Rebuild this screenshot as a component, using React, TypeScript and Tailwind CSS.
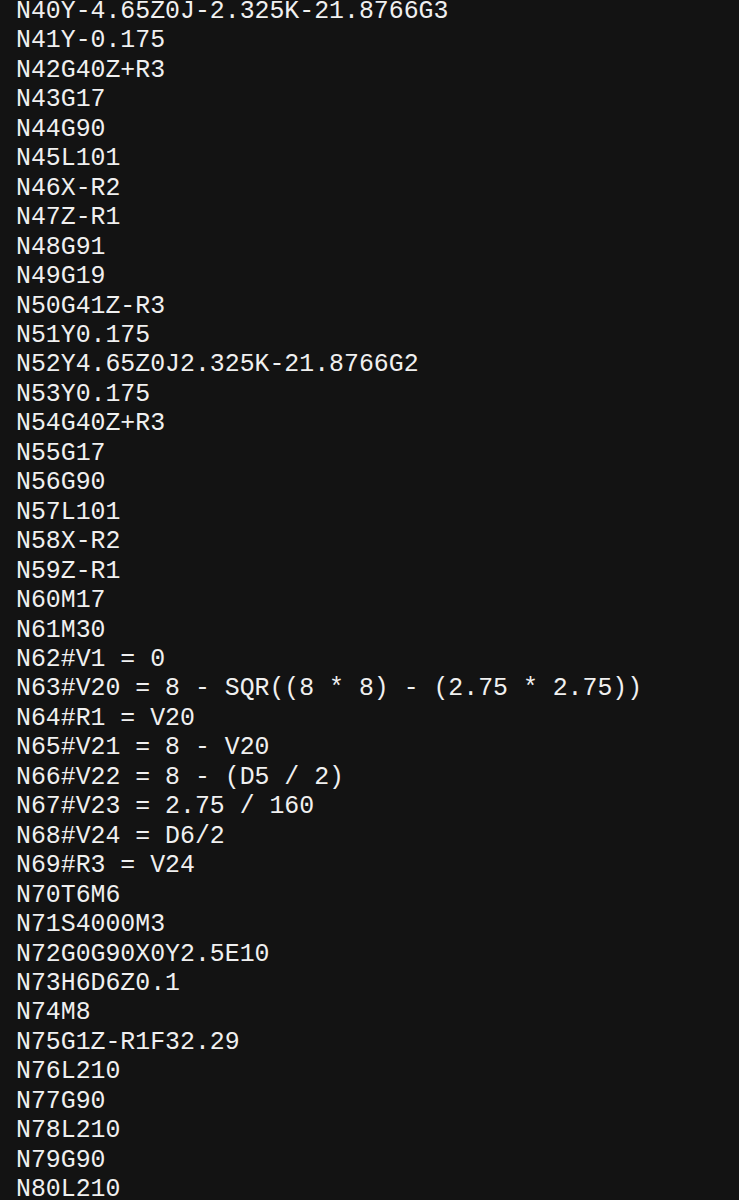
import React from 'react';

const lines = [
  'N40Y-4.65Z0J-2.325K-21.8766G3',
  'N41Y-0.175',
  'N42G40Z+R3',
  'N43G17',
  'N44G90',
  'N45L101',
  'N46X-R2',
  'N47Z-R1',
  'N48G91',
  'N49G19',
  'N50G41Z-R3',
  'N51Y0.175',
  'N52Y4.65Z0J2.325K-21.8766G2',
  'N53Y0.175',
  'N54G40Z+R3',
  'N55G17',
  'N56G90',
  'N57L101',
  'N58X-R2',
  'N59Z-R1',
  'N60M17',
  'N61M30',
  'N62#V1 = 0',
  'N63#V20 = 8 - SQR((8 * 8) - (2.75 * 2.75))',
  'N64#R1 = V20',
  'N65#V21 = 8 - V20',
  'N66#V22 = 8 - (D5 / 2)',
  'N67#V23 = 2.75 / 160',
  'N68#V24 = D6/2',
  'N69#R3 = V24',
  'N70T6M6',
  'N71S4000M3',
  'N72G0G90X0Y2.5E10',
  'N73H6D6Z0.1',
  'N74M8',
  'N75G1Z-R1F32.29',
  'N76L210',
  'N77G90',
  'N78L210',
  'N79G90',
  'N80L210',
];

export default function App() {
  return (
    <div className="w-[739px] h-[1200px] overflow-hidden bg-[#131313]">
      {/* program listing, one block line per row */}
      <pre
        className="m-0 pl-4 -mt-[3px] text-[24.85px] leading-[29.45px] text-[#f0f0f0] whitespace-pre"
        style={{ fontFamily: '"Liberation Mono", monospace' }}
      >
        {lines.join('\n')}
      </pre>
    </div>
  );
}
